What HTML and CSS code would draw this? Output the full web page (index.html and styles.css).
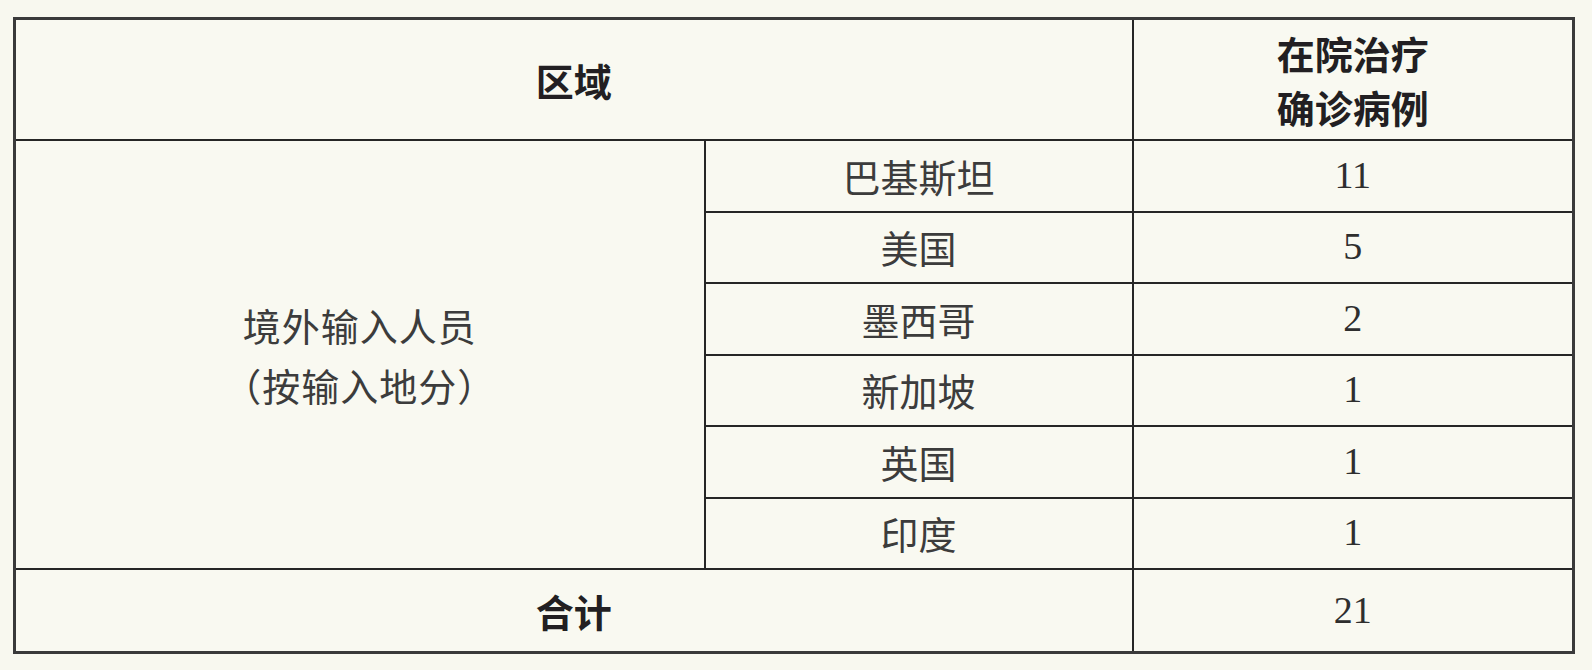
FILE: index.html
```html
<!DOCTYPE html>
<html lang="zh-CN">
<head>
<meta charset="utf-8">
<link rel="stylesheet" href="styles.css">
</head>
<body>
<table class="cases">
  <colgroup>
    <col class="c-region">
    <col class="c-country">
    <col class="c-num">
  </colgroup>
  <thead>
    <tr class="head">
      <th colspan="2">区域</th>
      <th>在院治疗<br>确诊病例</th>
    </tr>
  </thead>
  <tbody>
    <tr class="row">
      <td rowspan="6" class="group">境外输入人员<br>（按输入地分）</td>
      <td>巴基斯坦</td>
      <td class="num">11</td>
    </tr>
    <tr class="row"><td>美国</td><td class="num">5</td></tr>
    <tr class="row"><td>墨西哥</td><td class="num">2</td></tr>
    <tr class="row"><td>新加坡</td><td class="num">1</td></tr>
    <tr class="row"><td>英国</td><td class="num">1</td></tr>
    <tr class="row"><td>印度</td><td class="num">1</td></tr>
    <tr class="total">
      <th colspan="2">合计</th>
      <td class="num">21</td>
    </tr>
  </tbody>
</table>
</body>
</html>
```
FILE: styles.css
```css
html, body {
  margin: 0;
  padding: 0;
  background: #f8f8ef;
}
body {
  padding: 17px 0 0 13px;
  font-family: "Noto Sans CJK SC", "Noto Sans", sans-serif;
  color: #3c3c3c;
}
.cases {
  border-collapse: collapse;
  width: 1559px;
  table-layout: fixed;
  border: 3px solid #3a3a3a;
  background: #f9f9f1;
}
.c-region { width: 690px; }
.c-country { width: 428px; }
.c-num { width: 441px; }
.cases th,
.cases td {
  border: 2px solid #262626;
  text-align: center;
  vertical-align: middle;
  padding: 0;
  font-size: 38px;
  font-weight: 400;
  line-height: 1.2;
}
.cases th {
  font-weight: 700;
  color: #221f22;
}
.cases .head th { height: 119px; line-height: 54px; }
.cases .row td { height: 69.5px; }
.cases .group {
  line-height: 60px;
  letter-spacing: 1px;
}
.cases .num {
  font-family: "Liberation Serif", "DejaVu Serif", serif;
  font-size: 38px;
  color: #2e2e2e;
}
.cases .total th,
.cases .total td { height: 81px; }
```
